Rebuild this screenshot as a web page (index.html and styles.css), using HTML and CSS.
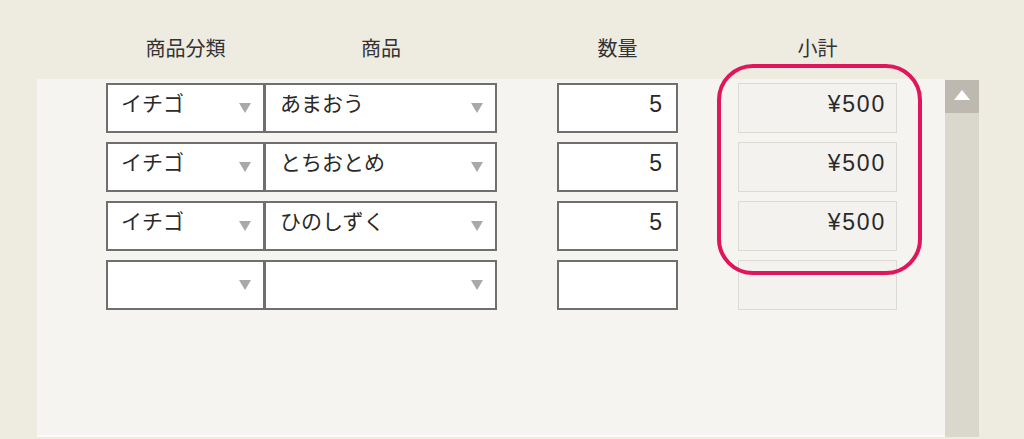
FILE: index.html
```html
<!DOCTYPE html>
<html lang="ja">
<head>
<meta charset="utf-8">
<title>注文</title>
<link rel="stylesheet" href="styles.css">
</head>
<body>
<div class="page">
  <div class="head">
    <div class="cols">
      <div class="h h-cat">商品分類</div>
      <div class="h h-prod">商品</div>
      <div class="h h-qty">数量</div>
      <div class="h h-sub">小計</div>
    </div>
  </div>
  <div class="panel">
    <div class="rows">
      <div class="cols row">
        <div class="sel cat"><span>イチゴ</span><i class="arrow"></i></div>
        <div class="sel prod"><span>あまおう</span><i class="arrow"></i></div>
        <div class="num qty">5</div>
        <div class="num sub">¥500</div>
      </div>
      <div class="cols row">
        <div class="sel cat"><span>イチゴ</span><i class="arrow"></i></div>
        <div class="sel prod"><span>とちおとめ</span><i class="arrow"></i></div>
        <div class="num qty">5</div>
        <div class="num sub">¥500</div>
      </div>
      <div class="cols row">
        <div class="sel cat"><span>イチゴ</span><i class="arrow"></i></div>
        <div class="sel prod"><span>ひのしずく</span><i class="arrow"></i></div>
        <div class="num qty">5</div>
        <div class="num sub">¥500</div>
      </div>
      <div class="cols row">
        <div class="sel cat"><span></span><i class="arrow"></i></div>
        <div class="sel prod"><span></span><i class="arrow"></i></div>
        <div class="num qty"></div>
        <div class="num sub"></div>
      </div>
    </div>
    <div class="highlight"></div>
  </div>
  <div class="scroll">
    <div class="scroll-btn"><i class="up"></i></div>
  </div>
</div>
</body>
</html>
```

FILE: styles.css
```css
html, body {
  margin: 0;
  padding: 0;
  height: 100%;
}
body {
  background: #eeebe1;
  font-family: "Noto Sans CJK JP", "Liberation Sans", sans-serif;
  color: #2a2a2a;
  overflow: hidden;
}
.page {
  display: grid;
  grid-template-columns: 37px 908px 34px 1fr;
  grid-template-rows: 79px 358px;
  height: 439px;
}
.head {
  grid-column: 2;
  grid-row: 1;
  padding-left: 69px;
  padding-top: 34px;
  box-sizing: border-box;
}
.cols {
  display: grid;
  grid-template-columns: 159px 232px 60px 121px 60px 159px;
}
.h {
  font-size: 20px;
  line-height: 28px;
  text-align: center;
  color: #333;
}
.h-cat { grid-column: 1; }
.h-prod { grid-column: 2; }
.h-qty { grid-column: 4; }
.h-sub { grid-column: 6; }

.panel {
  grid-column: 2;
  grid-row: 2;
  background: #f5f4f0;
  position: relative;
  padding: 4px 0 0 69px;
  box-sizing: border-box;
  border-bottom: 2px solid #fbfaf6;
}
.rows {
  display: flex;
  flex-direction: column;
  gap: 9px;
}
.row {
  height: 50px;
}
.sel {
  background: #fff;
  border: 2px solid #6f6f6f;
  box-sizing: border-box;
  display: flex;
  justify-content: space-between;
  align-items: flex-start;
  font-size: 21px;
  line-height: 28px;
  padding: 3px 12px 0 13px;
}
.sel.prod {
  margin-left: -1px;
  padding-left: 14px;
}
.arrow {
  width: 0;
  height: 0;
  border-left: 6px solid transparent;
  border-right: 6px solid transparent;
  border-top: 10px solid #a9a9a9;
  margin-top: 15px;
}
.num {
  box-sizing: border-box;
  font-family: "Liberation Sans", sans-serif;
  font-size: 23px;
  line-height: 28px;
  text-align: right;
  padding: 5px 14px 0 0;
}
.qty {
  grid-column: 4;
  background: #fff;
  border: 2px solid #6f6f6f;
  padding-right: 14px;
}
.sub {
  grid-column: 6;
  background: #f3f2ee;
  border: 1px solid #dcdad4;
  padding-top: 6px;
  padding-right: 10px;
  letter-spacing: 1.8px;
}
.highlight {
  position: absolute;
  left: 680px;
  top: -15px;
  width: 205px;
  height: 211px;
  border: 4px solid #e0165c;
  border-radius: 36px;
  box-sizing: border-box;
}

.scroll {
  grid-column: 3;
  grid-row: 2;
  background: #dad7cc;
  margin-top: 1px;
}
.scroll-btn {
  height: 33px;
  background: #bdb9b0;
  display: flex;
  justify-content: center;
  padding-top: 10px;
  box-sizing: border-box;
}
.up {
  width: 0;
  height: 0;
  border-left: 8px solid transparent;
  border-right: 8px solid transparent;
  border-bottom: 10px solid #fff;
}
```
